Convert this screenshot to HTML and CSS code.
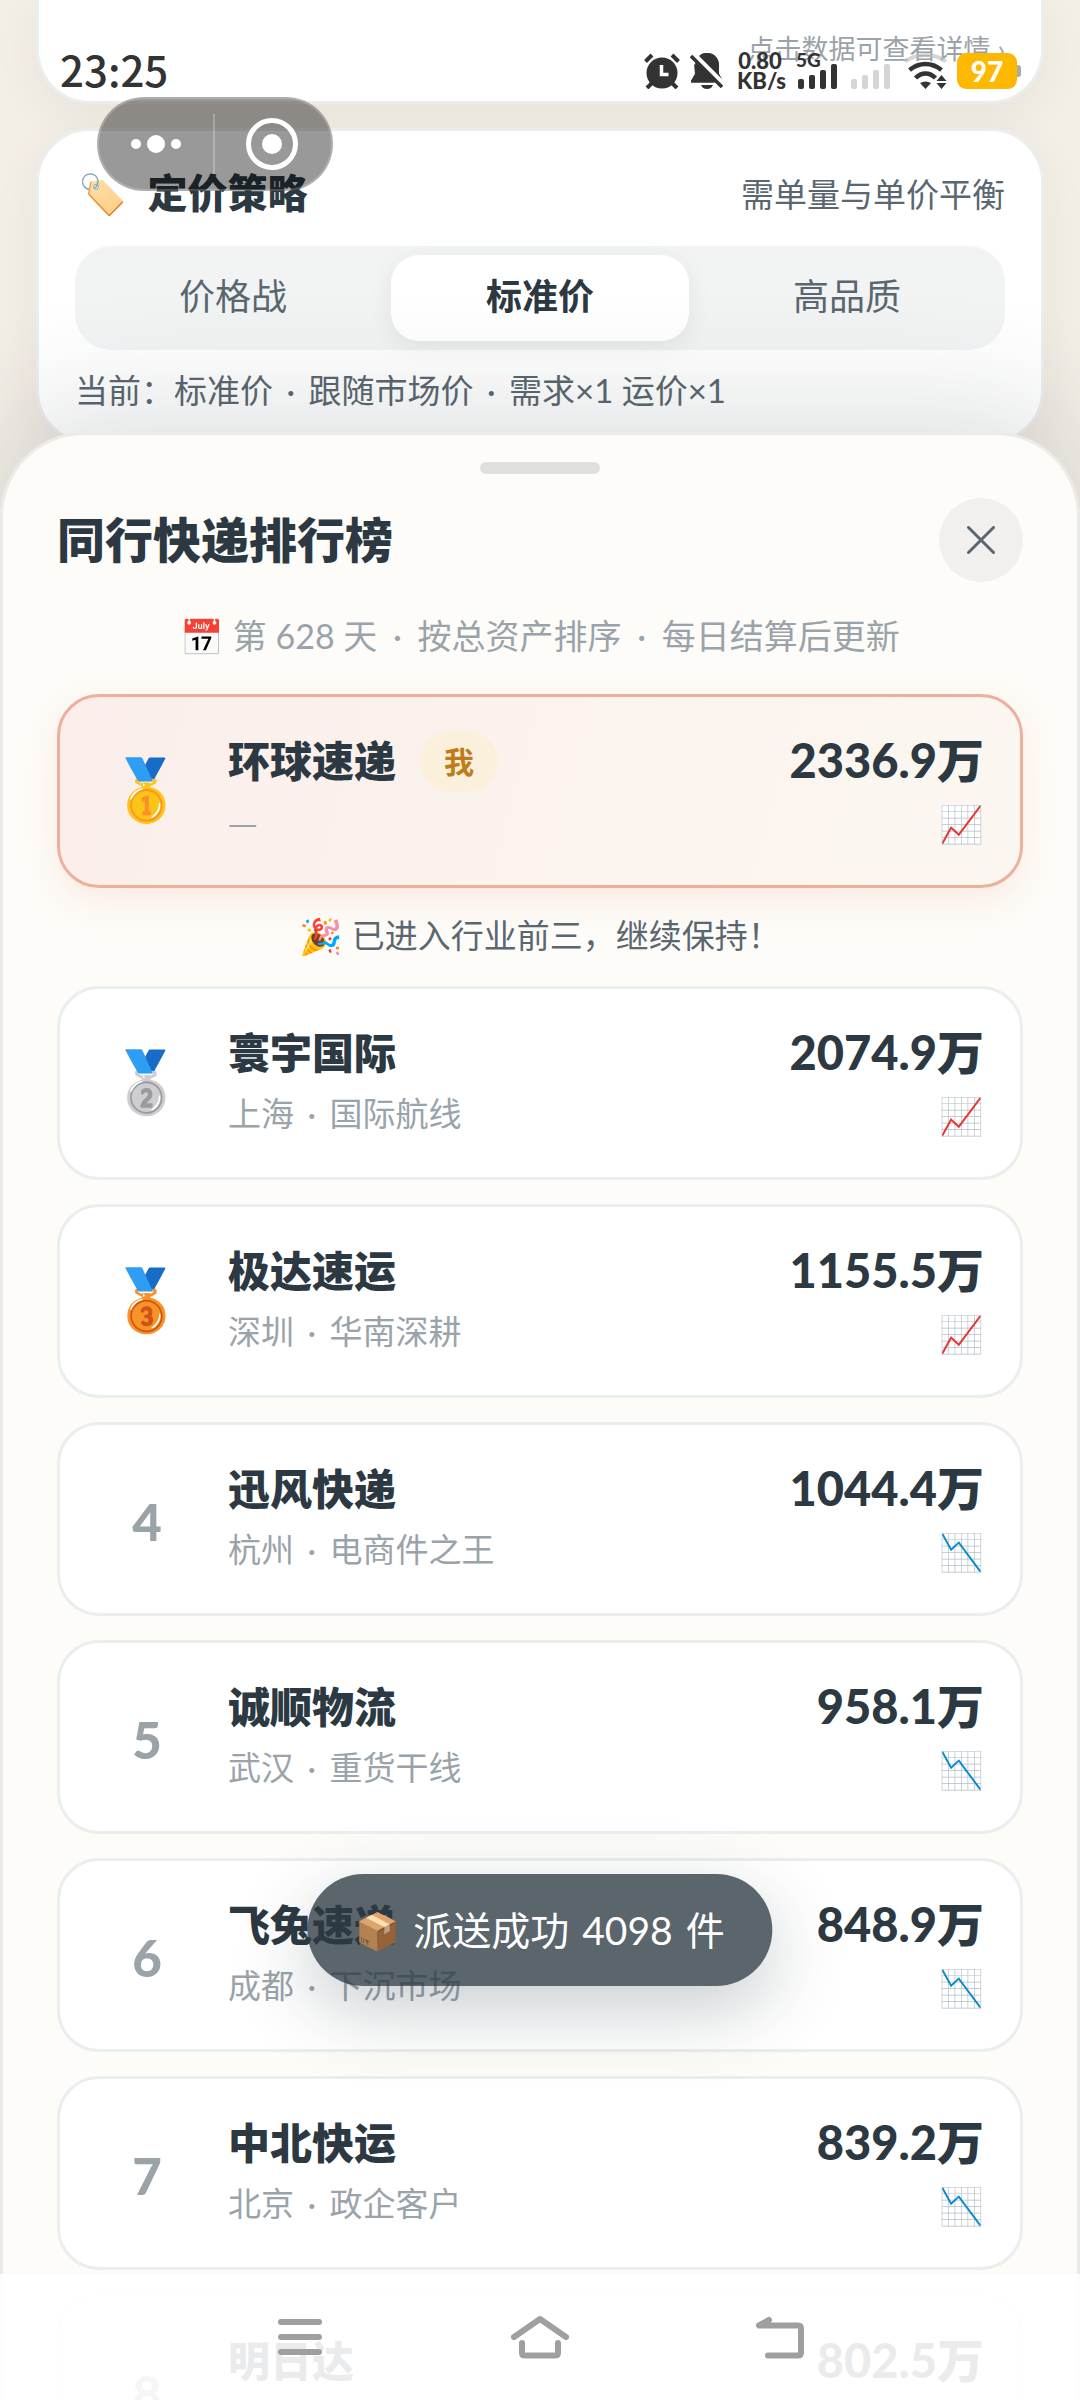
FILE: index.html
```html
<!DOCTYPE html>
<html lang="zh-CN">
<head>
<meta charset="utf-8">
<meta name="viewport" content="width=device-width, initial-scale=1">
<title>同行快递排行榜</title>
<link rel="stylesheet" href="styles.css">
</head>
<body>
<div class="app">
  <main class="page">
    <section class="panel panel-data">
      <a class="detail-link" href="#detail">点击数据可查看详情 ›</a>
    </section>
    <section class="panel panel-price">
      <header class="panel-head">
        <h2 class="panel-title"><span class="panel-emoji">🏷️</span>定价策略</h2>
        <span class="panel-note">需单量与单价平衡</span>
      </header>
      <div class="segment">
        <button class="segment-item" type="button">价格战</button>
        <button class="segment-item is-active" type="button">标准价</button>
        <button class="segment-item" type="button">高品质</button>
      </div>
      <p class="panel-current">当前：标准价 <span class="dot">·</span> 跟随市场价 <span class="dot">·</span> 需求×1 运价×1</p>
    </section>
  </main>

  <section class="sheet">
    <div class="handle"></div>
    <header class="sheet-head">
      <h1 class="sheet-title">同行快递排行榜</h1>
      <button class="close" type="button" aria-label="关闭">
        <svg width="28" height="28" viewBox="0 0 28 28"><path d="M1.500 1.500l25 25M26.500 1.500l-25 25" stroke="#5a6770" stroke-width="3" fill="none" stroke-linecap="round"/></svg>
      </button>
    </header>
    <p class="sheet-note"><span class="note-emoji">📅</span><span>第 628 天 <span class="dot">·</span> 按总资产排序 <span class="dot">·</span> 每日结算后更新</span></p>

    <ol class="ranks">
      <li class="rank is-me">
        <span class="place medal">🥇</span>
        <div class="who"><div class="name">环球速递<span class="me">我</span></div><div class="sub blank">—</div></div>
        <div class="worth"><div class="amount">2336.9万</div><div class="trend">📈</div></div>
      </li>
      <li class="cheer"><span class="note-emoji">🎉</span><span>已进入行业前三，继续保持！</span></li>
      <li class="rank">
        <span class="place medal">🥈</span>
        <div class="who"><div class="name">寰宇国际</div><div class="sub">上海 <span class="dot">·</span> 国际航线</div></div>
        <div class="worth"><div class="amount">2074.9万</div><div class="trend">📈</div></div>
      </li>
      <li class="rank">
        <span class="place medal">🥉</span>
        <div class="who"><div class="name">极达速运</div><div class="sub">深圳 <span class="dot">·</span> 华南深耕</div></div>
        <div class="worth"><div class="amount">1155.5万</div><div class="trend">📈</div></div>
      </li>
      <li class="rank">
        <span class="place">4</span>
        <div class="who"><div class="name">迅风快递</div><div class="sub">杭州 <span class="dot">·</span> 电商件之王</div></div>
        <div class="worth"><div class="amount">1044.4万</div><div class="trend">📉</div></div>
      </li>
      <li class="rank">
        <span class="place">5</span>
        <div class="who"><div class="name">诚顺物流</div><div class="sub">武汉 <span class="dot">·</span> 重货干线</div></div>
        <div class="worth"><div class="amount">958.1万</div><div class="trend">📉</div></div>
      </li>
      <li class="rank">
        <span class="place">6</span>
        <div class="who"><div class="name">飞兔速递</div><div class="sub">成都 <span class="dot">·</span> 下沉市场</div></div>
        <div class="worth"><div class="amount">848.9万</div><div class="trend">📉</div></div>
      </li>
      <li class="rank">
        <span class="place">7</span>
        <div class="who"><div class="name">中北快运</div><div class="sub">北京 <span class="dot">·</span> 政企客户</div></div>
        <div class="worth"><div class="amount">839.2万</div><div class="trend">📉</div></div>
      </li>
      <li class="rank">
        <span class="place">8</span>
        <div class="who"><div class="name">明日达</div><div class="sub"></div></div>
        <div class="worth"><div class="amount">802.5万</div><div class="trend"></div></div>
      </li>
    </ol>
  </section>

  <div class="toast" role="status"><span class="toast-emoji">📦</span><span>派送成功</span><span>4098</span><span>件</span></div>

  <div class="capsule">
    <button class="capsule-btn" type="button" aria-label="更多">
      <svg width="52" height="20" viewBox="0 0 52 20" fill="#fff"><circle cx="6" cy="10" r="5"/><circle cx="26" cy="10" r="9"/><circle cx="46" cy="10" r="5"/></svg>
    </button>
    <button class="capsule-btn" type="button" aria-label="关闭小程序">
      <svg width="54" height="54" viewBox="0 0 54 54"><circle cx="27" cy="27" r="23.500" fill="none" stroke="#fff" stroke-width="5"/><circle cx="27" cy="27" r="10" fill="#fff"/></svg>
    </button>
  </div>

  <div class="status">
    <time class="clock">23:25</time>
    <div class="status-icons">
      <svg class="alarm" width="36" height="36" viewBox="0 0 36 36"><circle cx="18" cy="20" r="15.500" fill="#333"/><path d="M1.500 8.500L8 2M34.500 8.500L28 2" stroke="#333" stroke-width="4"/><path d="M3 35l5-5M33 35l-5-5" stroke="#333" stroke-width="4"/><path d="M17.500 12v9.500h7" stroke="#fff" stroke-width="3.500" fill="none"/></svg>
      <svg class="mute" width="34" height="36" viewBox="0 0 34 36"><path d="M17 0c8 0 12 6 12 13v8l4 7v1.500H1V28l4-7v-8C5 6 9 0 17 0z" fill="#333"/><path d="M11 32h12q-1.500 4-6 4t-6-4z" fill="#333"/><path d="M0 0h9l25 28v8z" fill="#fff"/><path d="M9 3Q12 0 17 0c8 0 12 6 12 13v8l3 5z" fill="#333"/><path d="M4 11l20 18.500H1V28l4-7z" fill="#333"/><path d="M1 3l31 31" stroke="#333" stroke-width="3.500"/></svg>
      <div class="speed"><span>0.80</span><span>KB/s</span></div>
      <div class="cell"><span class="net">5G</span>
        <svg width="40" height="25" viewBox="0 0 40 25" fill="#333"><rect y="15" width="6" height="10" rx="2"/><rect x="11" y="11" width="6" height="14" rx="2"/><rect x="22" y="6" width="6" height="19" rx="2"/><rect x="33" width="6" height="25" rx="2"/></svg>
      </div>
      <div class="cell">
        <svg width="40" height="25" viewBox="0 0 40 25" fill="#d5d5d5"><rect y="15" width="6" height="10" rx="2"/><rect x="11" y="11" width="6" height="14" rx="2"/><rect x="22" y="6" width="6" height="19" rx="2"/><rect x="33" width="6" height="25" rx="2"/></svg>
      </div>
      <svg class="wifi" width="44" height="36" viewBox="0 0 44 36"><path d="M1 8.500Q10 2 21.500 2T42 8.500" stroke="#bbb" stroke-opacity=".6" stroke-width="4" fill="none"/><path d="M5.500 17Q13 11 21.500 11T37.500 17" stroke="#333" stroke-width="4.500" fill="none"/><path d="M11.500 25Q16 20.500 21.500 20.500T31.500 25" stroke="#333" stroke-width="4.500" fill="none"/><path d="M16 30q5.500-3 11 0l-5.500 6z" fill="#333"/><path d="M32.500 28l5-6 5 6zM32.500 30h10l-5 6z" fill="#333"/></svg>
      <div class="battery">97</div>
    </div>
  </div>

  <nav class="navbar">
    <button class="nav-btn" type="button" aria-label="最近任务">
      <svg width="60" height="44" viewBox="0 0 60 44" stroke="#9f9f9f" stroke-width="6" stroke-linecap="round"><path d="M11 7h38M11 22h38M11 37h38"/></svg>
    </button>
    <button class="nav-btn" type="button" aria-label="主页">
      <svg width="60" height="44" viewBox="0 0 60 44" fill="none" stroke="#9f9f9f" stroke-width="6" stroke-linecap="round" stroke-linejoin="round"><path d="M4 22L30 4l26 18"/><path d="M12 28v10q0 2.500 3 2.500h30q3 0 3-2.500V28"/></svg>
    </button>
    <button class="nav-btn" type="button" aria-label="返回">
      <svg width="60" height="44" viewBox="0 0 60 44" fill="none" stroke="#9f9f9f" stroke-width="6" stroke-linecap="round" stroke-linejoin="round"><path d="M19 5L9 10.500h39q3 0 3 3v24q0 3-3 3H18"/></svg>
    </button>
  </nav>
</div>
</body>
</html>
```
FILE: styles.css
```css
* { box-sizing: border-box; }

body {
  margin: 0;
  color: #2c3942;
  font-family: Lato, "Noto Sans CJK SC", "Noto Color Emoji", sans-serif;
  font-size: 33px;
}

h1, h2, p, ol { margin: 0; padding: 0; }
ol { list-style: none; }

button {
  border: 0;
  padding: 0;
  background: none;
  color: inherit;
  font: inherit;
}

svg { display: block; }

.dot { margin: 0 5px; }

.app {
  position: relative;
  height: 100vh;
  overflow: hidden;
  background: #f3eee6;
}

/* page behind the sheet */
.page {
  display: flex;
  flex-direction: column;
  gap: 24px;
  padding: 0 36px;
}

.panel {
  border: 3px solid #ebeeee;
  border-radius: 54px;
  background: #fff;
  box-shadow: 0 12px 48px rgba(58, 56, 50, .06);
}

.panel-data {
  display: flex;
  justify-content: flex-end;
  border-top: 0;
  border-radius: 0 0 54px 54px;
  padding: 27px 36px 31px;
}

.detail-link {
  color: #9aa3aa;
  font-size: 27px;
  line-height: 43px;
  text-decoration: none;
}

.panel-price {
  padding: 30px 36px 27px;
}

.panel-head {
  display: flex;
  align-items: center;
  justify-content: space-between;
  height: 63px;
}

.panel-title {
  display: flex;
  align-items: center;
  gap: 21px;
  padding-left: 3px;
  font-size: 40px;
  font-weight: 900;
  line-height: 60px;
}

.panel-emoji { font-size: 39px; font-weight: 400; }

.panel-note { color: #5a6770; }

.segment {
  display: grid;
  grid-template-columns: repeat(3, 1fr);
  gap: 9px;
  margin-top: 22px;
  border-radius: 36px;
  padding: 9px;
  background: #f2f4f4;
}

.segment-item {
  height: 86px;
  border-radius: 28px;
  padding-bottom: 3px;
  color: #5a6770;
  font-size: 36px;
  line-height: 83px;
}

.segment-item.is-active {
  background: #fff;
  color: #2c3942;
  font-weight: 700;
  box-shadow: 0 6px 24px rgba(45, 58, 64, .08);
}

.panel-current {
  margin-top: 16px;
  color: #5a6770;
  line-height: 48px;
}

/* ranking sheet */
.sheet {
  position: absolute;
  right: 0;
  bottom: 0;
  left: 0;
  height: 82vh;
  overflow: hidden;
  border: 3px solid #ebecea;
  border-bottom: 0;
  border-radius: 84px 84px 0 0;
  padding: 27px 54px 0;
  background: #fdfcf8;
  box-shadow: 0 -24px 120px rgba(45, 58, 64, .16);
}

.handle {
  width: 120px;
  height: 12px;
  margin: 0 auto;
  border-radius: 6px;
  background: #e0e0df;
}

.sheet-head {
  display: flex;
  align-items: center;
  justify-content: space-between;
  margin-top: 24px;
}

.sheet-title {
  font-size: 48px;
  font-weight: 900;
  line-height: 84px;
}

.close {
  display: grid;
  place-items: center;
  width: 84px;
  height: 84px;
  border-radius: 50%;
  background: #f1f0ee;
}

.sheet-note,
.cheer {
  display: flex;
  align-items: center;
  justify-content: center;
  gap: 9px;
}

.sheet-note {
  margin-top: 24px;
  color: #9aa3aa;
  font-size: 34px;
  line-height: 60px;
}

.sheet-note .dot { margin: 0 7px; }

.note-emoji { font-size: 35px; }

.ranks {
  display: flex;
  flex-direction: column;
  gap: 24px;
  margin-top: 28px;
}

.rank {
  display: flex;
  align-items: center;
  height: 194px;
  flex: none;
  border: 3px solid #ebeeee;
  border-radius: 42px;
  padding: 0 36px 0 39px;
  background: #fff;
}

.rank.is-me {
  border-color: #eeb09c;
  background: linear-gradient(105deg, #fbeeea, #fcf4ee 60%, #fbf7f0);
  box-shadow: 0 12px 36px rgba(238, 140, 110, .16);
}

.cheer {
  height: 50px;
  padding-bottom: 4px;
  color: #5a6770;
  line-height: 46px;
}

.place {
  width: 96px;
  margin-right: 33px;
  padding-top: 6px;
  color: #9aa3a8;
  font-size: 51px;
  font-weight: 900;
  line-height: 60px;
  text-align: center;
}

.place.medal {
  padding: 0 0 6px;
  font-size: 60px;
  font-weight: 400;
}

.who { flex: 1; }

.name {
  display: flex;
  align-items: center;
  gap: 24px;
  height: 60px;
  font-size: 42px;
  font-weight: 900;
  line-height: 60px;
}

.is-me .name { line-height: 57px; }

.me {
  border-radius: 31px;
  padding: 0 24px;
  background: #fbf0dc;
  color: #c07c1a;
  font-size: 30px;
  font-weight: 700;
  line-height: 61px;
}

.sub {
  height: 60px;
  color: #9aa3aa;
  line-height: 60px;
}

.sub.blank { font-family: "Noto Sans CJK SC", sans-serif; }

.worth { text-align: right; }

.amount {
  height: 62px;
  font-size: 47px;
  font-weight: 900;
  line-height: 62px;
}

.trend {
  height: 62px;
  font-size: 36px;
  line-height: 64px;
}

/* overlays */
.toast {
  position: absolute;
  bottom: 414px;
  left: 50%;
  display: flex;
  align-items: center;
  gap: 13px;
  height: 112px;
  border-radius: 56px;
  padding: 0 48px;
  background: rgba(45, 58, 66, .78);
  box-shadow: 0 24px 72px rgba(45, 58, 66, .25);
  color: #fff;
  font-size: 39px;
  line-height: 60px;
  white-space: nowrap;
  transform: translateX(-50%);
}

.toast-emoji { font-size: 36px; }

.capsule {
  position: absolute;
  top: 97px;
  left: 97px;
  display: flex;
  width: 236px;
  height: 94px;
  border: 2px solid rgba(255, 255, 255, .2);
  border-radius: 47px;
  background: rgba(0, 0, 0, .4);
}

.capsule-btn {
  display: grid;
  width: 114px;
  place-items: center;
}

.capsule-btn + .capsule-btn {
  flex: 1;
  background: linear-gradient(rgba(255, 255, 255, .25), rgba(255, 255, 255, .25)) left center / 2px 60px no-repeat;
}

.status {
  position: absolute;
  top: 0;
  right: 0;
  left: 0;
  display: flex;
  align-items: center;
  justify-content: space-between;
  height: 142px;
  padding: 0 63px 0 60px;
  color: #333;
  pointer-events: none;
}

.clock {
  padding-bottom: 6px;
  font-family: "Noto Sans CJK SC", sans-serif;
  font-size: 42px;
  font-weight: 500;
}

.status-icons {
  display: flex;
  align-items: center;
  height: 36px;
}

.alarm { margin-right: 10px; }
.mute { margin-right: 13px; }

.speed {
  display: flex;
  flex-direction: column;
  width: 46px;
  margin-right: 15px;
  font-size: 22px;
  font-weight: 900;
  line-height: 20px;
  text-align: center;
}

.cell {
  position: relative;
  display: flex;
  align-items: flex-end;
  height: 36px;
  margin-right: 13px;
}

.net {
  position: absolute;
  top: -2px;
  left: -2px;
  font-size: 19px;
  font-weight: 900;
  line-height: 18px;
}

.wifi { margin-right: 9px; }

.battery {
  position: relative;
  width: 60px;
  height: 36px;
  border-radius: 9px;
  background: #ffb800;
  color: #fff;
  font-size: 28px;
  font-weight: 900;
  line-height: 36px;
  text-align: center;
}

.battery::after {
  position: absolute;
  top: 12px;
  right: -4px;
  width: 4px;
  height: 12px;
  border-radius: 0 3px 3px 0;
  background: #aaa;
  content: "";
}

.navbar {
  position: absolute;
  right: 0;
  bottom: 0;
  left: 0;
  display: flex;
  justify-content: center;
  gap: 180px;
  height: 126px;
  background: rgba(255, 255, 255, .9);
}

.nav-btn {
  display: grid;
  place-items: center;
  width: 60px;
}
```
